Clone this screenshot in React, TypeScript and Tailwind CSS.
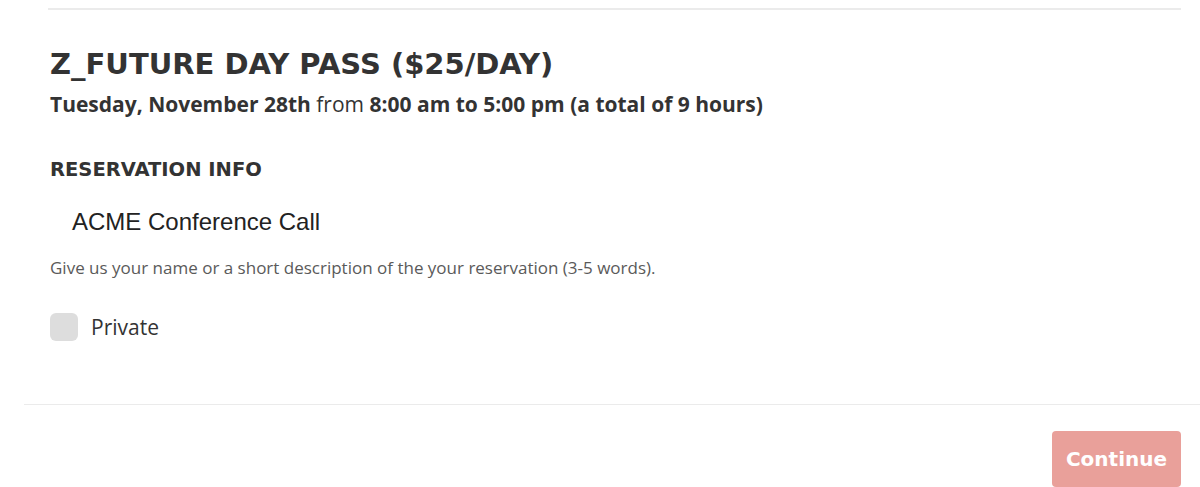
export default function App() {
  return (
    <div className="w-[1200px] h-[487px] overflow-hidden bg-white text-[#2e2e2e]">
      {/* top divider */}
      <div className="pl-[48px] pr-[19px] pt-[8px]">
        <div className="h-[2px] bg-[#ebebeb]" />
      </div>

      <div className="pl-[50px] pt-[36px]">
        <h1 className="text-[29px] leading-[36px] font-bold font-['DejaVu_Sans',sans-serif] text-[#333]">
          Z_FUTURE DAY PASS ($25/DAY)
        </h1>
        <p className="mt-[8px] text-[21px] leading-[28px] font-['Open_Sans',sans-serif] text-[#333]">
          <span className="font-bold">Tuesday, November 28th</span> from{' '}
          <span className="font-bold">8:00 am to 5:00 pm (a total of 9 hours)</span>
        </p>

        <h2 className="mt-[40px] text-[19.5px] leading-[24px] font-bold font-['DejaVu_Sans',sans-serif] text-[#333]">
          RESERVATION INFO
        </h2>

        <div className="mt-[26px] pl-[22px] text-[24px] leading-[28px] font-['Liberation_Sans',sans-serif] text-[#222]">
          ACME Conference Call
        </div>

        <p className="mt-[20px] text-[17px] leading-[24px] font-['Open_Sans',sans-serif] text-[#5a5a5a]">
          Give us your name or a short description of the your reservation (3-5 words).
        </p>

        <label className="mt-[33px] flex items-center gap-[13px]">
          <span className="w-[28px] h-[28px] rounded-[6px] bg-[#dddddd]" />
          <span className="text-[21px] leading-[28px] font-['Open_Sans',sans-serif] text-[#333]">Private</span>
        </label>
      </div>

      {/* footer */}
      <div className="ml-[24px] mt-[63px] border-t border-[#ebebeb] flex justify-end pr-[19px] pt-[26px]">
        <button className="w-[129px] h-[56px] rounded-[4px] bg-[#e9a09a] text-white text-[20px] font-bold font-['DejaVu_Sans',sans-serif]">
          Continue
        </button>
      </div>
    </div>
  );
}
